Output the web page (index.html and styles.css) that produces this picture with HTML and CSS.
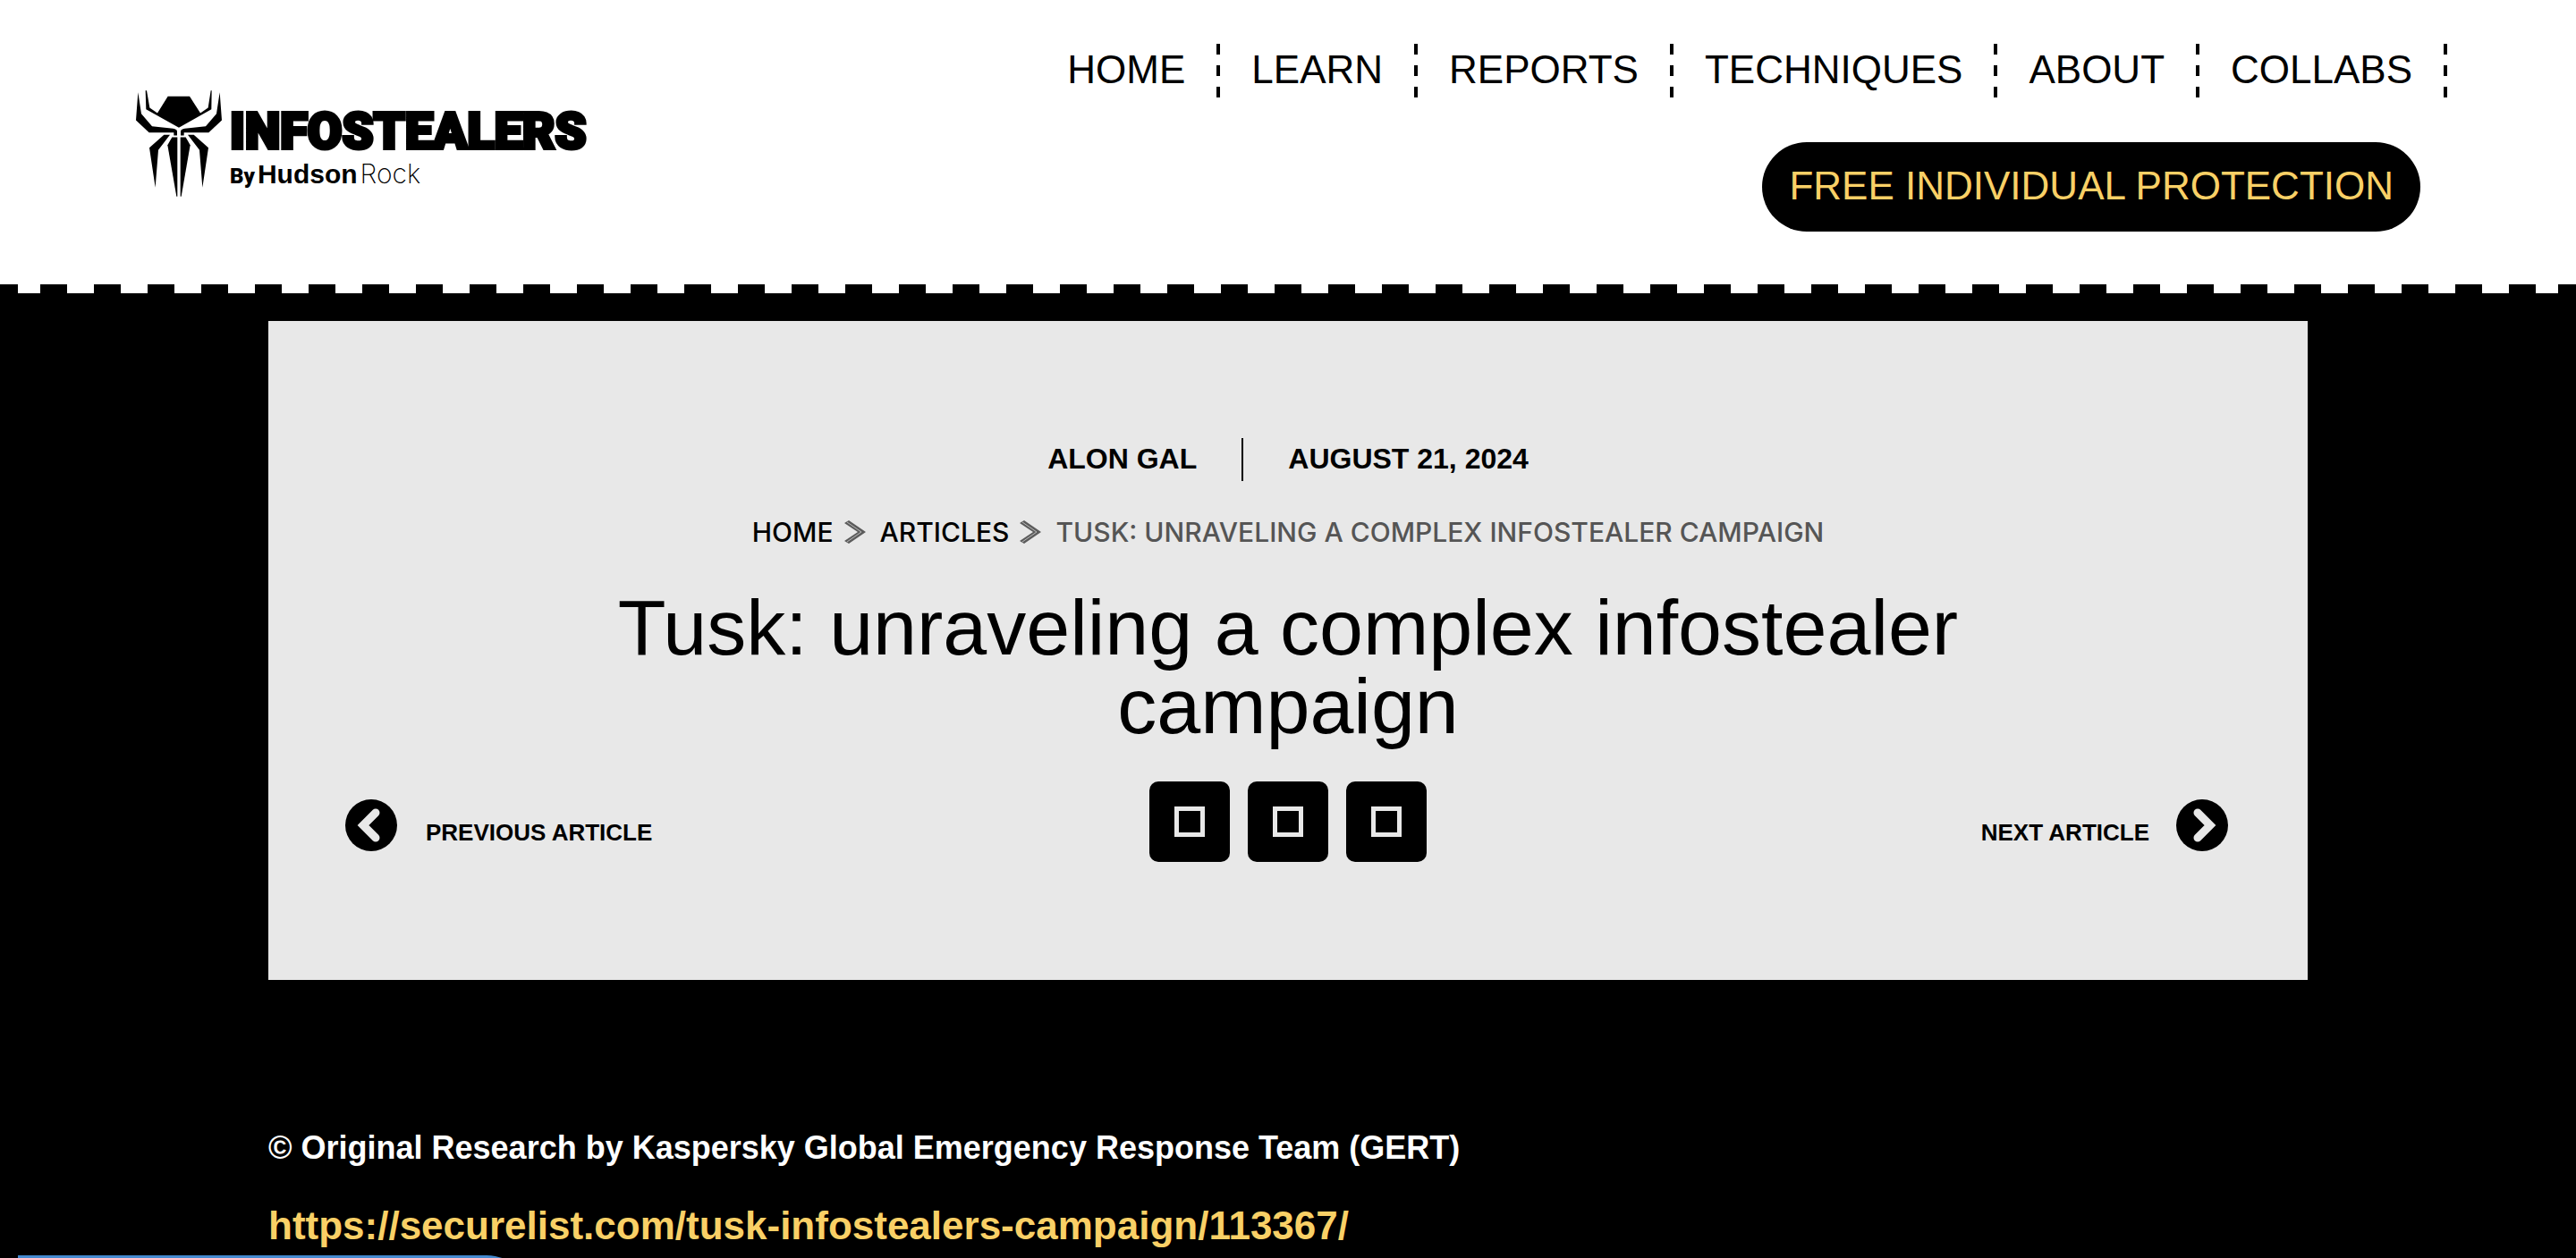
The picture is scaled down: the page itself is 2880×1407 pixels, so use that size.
FILE: index.html
```html
<!DOCTYPE html>
<html lang="en">
<head>
<meta charset="utf-8">
<meta name="viewport" content="width=device-width, initial-scale=1">
<title>Tusk: unraveling a complex infostealer campaign</title>
<link rel="stylesheet" href="styles.css">
</head>
<body>
<header class="site-header">
  <a class="logo" href="#">
    <svg class="logo-mark" viewBox="66 62 288 356" aria-hidden="true">
      <path d="M98 62L102 62L112 120L138 138L173 82H246L282 138L308 120L317 62L320 62L319 125L210 187L100 125Z"/>
      <g id="half">
        <path d="M73 68L84 140L120 182L190 190Q204 192 204 200V213H193V203H110L66 162Z"/>
        <path d="M160 211H180L141 262L131 388L111 254Z"/>
        <path d="M187 219H205V418L202 418L172 245Z"/>
      </g>
      <use href="#half" transform="matrix(-1 0 0 1 420 0)"/>
    </svg>
    <span class="logo-words">
      <span class="logo-name">INFOSTEALERS</span>
      <span class="logo-by"><span class="by">By</span><b class="hudson">Hudson</b><span class="rock">Rock</span></span>
    </span>
  </a>
  <nav class="menu">
    <ul class="menu-row">
      <li><a href="#">HOME</a></li>
      <li><a href="#">LEARN</a></li>
      <li><a href="#">REPORTS</a></li>
      <li><a href="#">TECHNIQUES</a></li>
      <li><a href="#">ABOUT</a></li>
      <li><a href="#">COLLABS</a></li>
    </ul>
    <a class="cta" href="#">FREE INDIVIDUAL PROTECTION</a>
  </nav>
</header>
<div class="teeth"></div>
<main class="page">
  <section class="hero">
    <div class="meta"><span>ALON GAL</span><time datetime="2024-08-21">AUGUST 21, 2024</time></div>
    <nav class="crumbs">
      <a href="#">HOME</a>
      <svg class="sep" viewBox="0 0 24 26" aria-hidden="true"><path class="sep-fill" d="M5 0L24 13L5 26L0 23L15 13L0 3Z"/><path class="sep-line" d="M3 2L19 13L3 24"/></svg>
      <a href="#">ARTICLES</a>
      <svg class="sep" viewBox="0 0 24 26" aria-hidden="true"><path class="sep-fill" d="M5 0L24 13L5 26L0 23L15 13L0 3Z"/><path class="sep-line" d="M3 2L19 13L3 24"/></svg>
      <span>TUSK: UNRAVELING A COMPLEX INFOSTEALER CAMPAIGN</span>
    </nav>
    <h1 class="title">Tusk: unraveling a complex infostealer campaign</h1>
    <div class="actions">
      <a class="step" href="#">
        <svg viewBox="0 0 58 58" aria-hidden="true"><circle cx="29" cy="29" r="29"/><path d="M34 15L20 29L34 43"/></svg>
        <span>PREVIOUS ARTICLE</span>
      </a>
      <div class="share">
        <button type="button" aria-label="Share on Facebook"><i></i></button>
        <button type="button" aria-label="Share on Twitter"><i></i></button>
        <button type="button" aria-label="Share on LinkedIn"><i></i></button>
      </div>
      <a class="step next" href="#">
        <span>NEXT ARTICLE</span>
        <svg viewBox="0 0 58 58" aria-hidden="true"><circle cx="29" cy="29" r="29"/><path d="M24 15L38 29L24 43"/></svg>
      </a>
    </div>
  </section>
  <article class="body">
    <p class="credit">© Original Research by Kaspersky Global Emergency Response Team (GERT)</p>
    <p class="source"><a href="#">https://securelist.com/tusk-infostealers-campaign/113367/</a></p>
  </article>
</main>
<div class="drawer"></div>
</body>
</html>
```
FILE: styles.css
```css
* { box-sizing: border-box; }
body {
  margin: 0;
  background: #000;
  color: #000;
  font-family: "Liberation Sans", Arial, sans-serif;
  overflow: hidden;
}
a { color: inherit; text-decoration: none; }

.site-header {
  display: flex;
  align-items: center;
  justify-content: space-between;
  padding: 49px 5% 59px;
  background: #fff;
}
.logo { display: flex; align-items: center; gap: 9px; margin-left: 8px; padding-top: 12px; }
.logo-mark { width: 96px; height: 119px; }
.logo-words { display: flex; flex-direction: column; padding-top: 6px; }
.logo-name {
  font: 900 56px/64px Roboto, sans-serif;
  -webkit-text-stroke: 4px #000;
}
.logo-by { display: flex; align-items: baseline; line-height: 30px; font-size: 30px; }
.by { font: 900 24px/30px Roboto, sans-serif; margin-right: 3px; }
.rock { font-family: Inter, sans-serif; font-weight: 200; margin-left: 3px; }

.menu { display: flex; flex-direction: column; align-items: flex-end; gap: 50px; font-size: 44px; }
.menu-row { display: flex; flex-wrap: wrap; justify-content: flex-end; margin: 0; padding: 0; list-style: none; }
.menu-row a {
  display: block;
  padding: 0 39px 2px 35px;
  line-height: 58px;
  background: repeating-linear-gradient(#000 0 12px, transparent 12px 24px) right / 4px 100% no-repeat;
}
.cta {
  margin-right: 30px;
  padding: 0 30px 2px;
  line-height: 98px;
  border-radius: 50px;
  background: #000;
  color: #f9d066;
}
.teeth {
  height: 10px;
  margin: 0 20px;
  background: repeating-linear-gradient(90deg, #fff 0 25px, #000 25px 55px, #fff 55px 60px);
}

.page { max-width: 2280px; margin: 31px auto 0; }
.hero { padding: 131px 86px 132px; background: #e8e8e8; }
.meta { display: flex; justify-content: center; font-weight: bold; font-size: 32px; line-height: 46px; }
.meta > * { padding: 0 50px 2px; }
.meta > * + * { border-left: 2px solid #000; }
.crumbs {
  display: flex;
  flex-wrap: wrap;
  align-items: center;
  justify-content: center;
  margin-top: 37px;
  font: 500 30px/40px Inter, sans-serif;
  color: #555;
}
.crumbs a { color: #000; }
.sep { width: 24px; height: 26px; margin: 0 16px 0 12px; }
.sep-fill { fill: #5c5c5c; }
.sep-line { fill: none; stroke: #bbb; stroke-width: 1; }
.title { max-width: 1600px; margin: 43px auto 0; font-weight: normal; font-size: 88px; line-height: 88px; text-align: center; }
.actions { display: grid; grid-template-columns: 1fr auto 1fr; align-items: center; margin-top: 40px; }
.share { display: flex; gap: 20px; }
.share button {
  display: grid;
  place-items: center;
  width: 90px;
  height: 90px;
  padding: 0;
  border: 0;
  border-radius: 10px;
  background: #000;
}
.share i { width: 34px; height: 34px; border: 5px solid #e8e8e8; }
.step { display: flex; align-items: center; gap: 32px; padding-top: 8px; font-weight: bold; font-size: 26px; line-height: 32px; }
.step span { padding-top: 16px; }
.step svg { width: 58px; height: 58px; }
.step path { fill: none; stroke: #e8e8e8; stroke-width: 9; stroke-linecap: round; }
.next { justify-content: flex-end; gap: 30px; padding-right: 3px; }

.body { padding-top: 160px; font-weight: bold; color: #fff; }
.credit { margin: 0; font-size: 36px; line-height: 56px; }
.source { margin: 26px 0 0; font-size: 44px; line-height: 66px; color: #f9d066; }

.drawer {
  position: fixed;
  left: 20px;
  bottom: -97px;
  width: 574px;
  height: 100px;
  border-radius: 0 50px 0 0;
  background: #448ad0;
}
```
